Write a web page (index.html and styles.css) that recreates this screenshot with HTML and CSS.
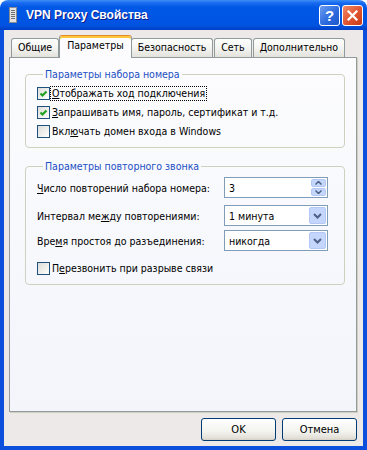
FILE: index.html
```html
<!DOCTYPE html>
<html lang="ru">
<head>
    <meta charset="UTF-8">
    <meta name="viewport" content="width=device-width, initial-scale=1.0">
    <title>VPN Proxy Свойства</title>
    <link rel="stylesheet" href="styles.css">
</head>
<body>

    <div class="window">
        <div class="titlebar">
            <svg class="title-icon" width="10" height="16" viewBox="0 0 10 16">
                <rect x="1.5" y="0.5" width="7" height="15" fill="#e4e4e4" stroke="#8c8c8c"/>
                <line x1="3" y1="3.5" x2="7" y2="3.5" stroke="#6f6f6f"/>
                <line x1="3" y1="5.5" x2="7" y2="5.5" stroke="#6f6f6f"/>
                <line x1="3" y1="7.5" x2="7" y2="7.5" stroke="#6f6f6f"/>
                <line x1="3" y1="9.5" x2="7" y2="9.5" stroke="#6f6f6f"/>
                <line x1="3" y1="11.5" x2="7" y2="11.5" stroke="#6f6f6f"/>
            </svg>
            <span class="title">VPN Proxy Свойства</span>
            <div class="caption-buttons">
                <span class="cap-btn help">?</span>
                <span class="cap-btn close">
                    <svg width="11" height="11" viewBox="0 0 11 11">
                        <path d="M1.5 1.5 L9.5 9.5 M9.5 1.5 L1.5 9.5" stroke="#fff" stroke-width="2.2" stroke-linecap="square"/>
                    </svg>
                </span>
            </div>
        </div>

        <div class="client">
            <div class="tabs">
                <span class="tab">Общие</span>
                <span class="tab active">Параметры</span>
                <span class="tab">Безопасность</span>
                <span class="tab">Сеть</span>
                <span class="tab">Дополнительно</span>
            </div>

            <div class="panel">
                <fieldset class="group">
                    <legend>Параметры набора номера</legend>
                    <label class="check">
                        <span class="box checked"></span>
                        <span class="check-text focus"><u>О</u>тображать ход подключения</span>
                    </label>
                    <label class="check">
                        <span class="box checked"></span>
                        <span class="check-text"><u>З</u>апрашивать имя, пароль, сертификат и т.д.</span>
                    </label>
                    <label class="check">
                        <span class="box"></span>
                        <span class="check-text">Вкл<u>ю</u>чать домен входа в Windows</span>
                    </label>
                </fieldset>

                <fieldset class="group redial">
                    <legend>Параметры повторного звонка</legend>
                    <div class="field">
                        <span class="field-label"><u>Ч</u>исло повторений набора номера:</span>
                        <div class="edit">
                            <span class="value">3</span>
                            <div class="spin">
                                <span class="spin-btn up"></span>
                                <span class="spin-btn down"></span>
                            </div>
                        </div>
                    </div>
                    <div class="field">
                        <span class="field-label">Интервал ме<u>ж</u>ду повторениями:</span>
                        <div class="edit combo">
                            <span class="value">1 минута</span>
                            <span class="drop-btn"></span>
                        </div>
                    </div>
                    <div class="field">
                        <span class="field-label">Вре<u>м</u>я простоя до разъединения:</span>
                        <div class="edit combo">
                            <span class="value">никогда</span>
                            <span class="drop-btn"></span>
                        </div>
                    </div>
                    <label class="check">
                        <span class="box"></span>
                        <span class="check-text">П<u>е</u>резвонить при разрыве связи</span>
                    </label>
                </fieldset>
            </div>

            <div class="actions">
                <button class="btn">OK</button>
                <button class="btn">Отмена</button>
            </div>
        </div>
    </div>

</body>
</html>
```

FILE: styles.css
```css
* {
    box-sizing: border-box;
}

body {
    margin: 0;
    background: #fff;
    font-family: "DejaVu Sans Condensed", "DejaVu Sans", sans-serif;
    font-size: 10.5px;
    color: #000;
}

u {
    text-decoration: underline;
    text-underline-offset: 1px;
}

.window {
    width: 367px;
    height: 450px;
    display: flex;
    flex-direction: column;
    border-radius: 8px 8px 0 0;
    overflow: hidden;
}

/* title bar */
.titlebar {
    height: 30px;
    display: flex;
    align-items: center;
    padding: 0 4px 0 8px;
    background: linear-gradient(#3d8ff7 0%, #1a6af0 10%, #0058e6 25%, #0055e5 60%, #0052e0 85%, #003fc4 100%);
}

.title-icon {
    flex: none;
}

.title {
    flex: 1;
    margin-left: 8px;
    font-family: "Liberation Sans", sans-serif;
    font-weight: bold;
    font-size: 12px;
    color: #fff;
    text-shadow: 1px 1px 0 #0a1a8a;
}

.caption-buttons {
    display: flex;
    gap: 2px;
}

.cap-btn {
    width: 21px;
    height: 21px;
    border: 1px solid #fff;
    border-radius: 3px;
    display: flex;
    align-items: center;
    justify-content: center;
}

.help {
    background: linear-gradient(135deg, #6a9cf0, #2a68dd 60%, #1f58c8);
    color: #fff;
    font-family: "Liberation Sans", sans-serif;
    font-weight: bold;
    font-size: 15px;
}

.close {
    background: linear-gradient(135deg, #f08a67, #e0532f 55%, #c63b18);
}

/* client area */
.client {
    flex: 1;
    display: flex;
    flex-direction: column;
    background: #ece9e8;
    border: 4px solid #0c4fdc;
    border-top: none;
    padding: 5px 6px 5px 5px;
}

.tabs {
    display: flex;
    align-items: flex-end;
    height: 22px;
    padding-left: 2px;
    position: relative;
    z-index: 1;
}

.tab {
    height: 19px;
    line-height: 17px;
    padding: 0 6px;
    margin-right: 1px;
    border: 1px solid #919b9c;
    border-bottom: none;
    border-radius: 3px 3px 0 0;
    background: linear-gradient(#fefefe, #f4f4f1 50%, #e3e2dc);
}

.tab.active {
    height: 23px;
    line-height: 18px;
    margin: 0 -1px -1px -1px;
    padding: 0 7px;
    background: #fcfcfe;
    border-top: 1px solid #e68b2c;
    box-shadow: inset 0 2px #ffc73c;
    position: relative;
}

.panel {
    flex: 1;
    background: linear-gradient(#fcfcfe, #f3f5fb);
    border: 1px solid #919b9c;
    box-shadow: 1px 1px 0 #d0cebf;
    padding: 10px 11px 0 15px;
}

/* group boxes */
.group {
    margin: 0;
    border: 1px solid #d0d0bf;
    border-radius: 4px;
    padding: 3px 16px 6px 11px;
}

.group legend {
    margin-left: 6px;
    padding: 0 2px;
    line-height: 13px;
    color: #1c4fc4;
}

.redial {
    margin-top: 12px;
    padding-top: 4px;
    padding-bottom: 6px;
}

.check {
    display: flex;
    align-items: center;
    height: 19px;
}

.box {
    width: 13px;
    height: 13px;
    margin-right: 1px;
    border: 1px solid #1c5180;
    background: linear-gradient(135deg, #dcdcd7, #fff);
}

.box.checked {
    background-image: url("data:image/svg+xml,%3Csvg xmlns='http://www.w3.org/2000/svg' width='11' height='11'%3E%3Cpath d='M2.5 5.5 L4.5 7.5 L8.5 3.5' fill='none' stroke='%2321a121' stroke-width='2.2'/%3E%3C/svg%3E"), linear-gradient(135deg, #dcdcd7, #fff);
}

.check-text {
    padding: 0 1px;
    line-height: 13px;
}

.focus {
    outline: 1px dotted #000;
}

/* fields */
.field {
    display: flex;
    align-items: center;
    height: 21px;
    margin-bottom: 7px;
}

.field + .field {
    margin-bottom: 4px;
}

.field-label {
    flex: 1;
}

.edit {
    width: 104px;
    height: 21px;
    border: 1px solid #7f9db9;
    background: #fff;
    display: flex;
    align-items: center;
    padding: 0 1px 0 4px;
}

.value {
    flex: 1;
}

.spin {
    display: flex;
    flex-direction: column;
    gap: 1px;
}

.spin-btn,
.drop-btn {
    border: 1px solid #b4c8f6;
    border-radius: 2px;
    background-color: #c5d6fc;
    background-repeat: no-repeat;
    background-position: center;
}

.spin-btn {
    width: 15px;
    height: 8px;
}

.spin-btn.up {
    background-image: url("data:image/svg+xml,%3Csvg xmlns='http://www.w3.org/2000/svg' width='7' height='4'%3E%3Cpath d='M0.5 3.5 L3.5 0.5 L6.5 3.5' fill='none' stroke='%234d6185' stroke-width='1.5'/%3E%3C/svg%3E");
}

.spin-btn.down {
    background-image: url("data:image/svg+xml,%3Csvg xmlns='http://www.w3.org/2000/svg' width='7' height='4'%3E%3Cpath d='M0.5 0.5 L3.5 3.5 L6.5 0.5' fill='none' stroke='%234d6185' stroke-width='1.5'/%3E%3C/svg%3E");
}

.drop-btn {
    width: 17px;
    height: 17px;
    background-image: url("data:image/svg+xml,%3Csvg xmlns='http://www.w3.org/2000/svg' width='9' height='6'%3E%3Cpath d='M1 1 L4.5 4.5 L8 1' fill='none' stroke='%234d6185' stroke-width='2'/%3E%3C/svg%3E");
}

.redial .check {
    margin-top: 8px;
}

/* dialog buttons */
.actions {
    display: flex;
    justify-content: flex-end;
    gap: 6px;
    padding-top: 6px;
}

.btn {
    width: 75px;
    height: 23px;
    border: 1px solid #003c74;
    border-radius: 3px;
    background: linear-gradient(#fff, #f3f3ef 60%, #e3e0d8 90%, #d6d0c5);
    font-family: inherit;
    font-size: 11px;
    color: #000;
    padding: 0;
}
```
